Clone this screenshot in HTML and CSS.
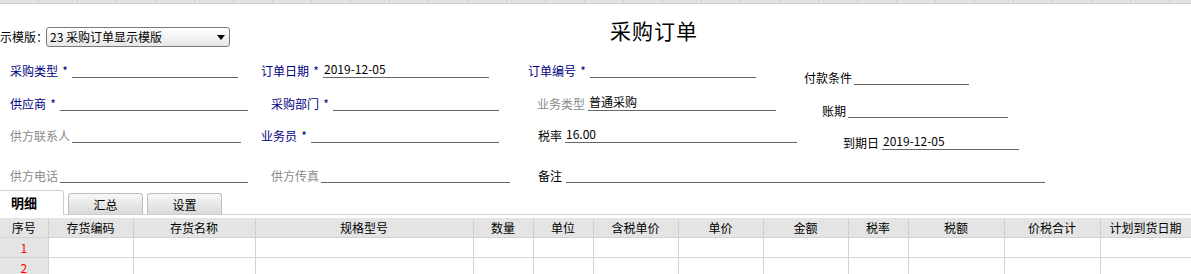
FILE: index.html
```html
<!DOCTYPE html>
<html lang="zh-CN">
<head>
<meta charset="utf-8">
<title>采购订单</title>
<link rel="stylesheet" href="styles.css">
</head>
<body>
<div class="topbar"></div>
<header class="head">
  <div class="tpl">
    <span class="tpl-label">示模版：</span>
    <div class="select"><span class="select-text">23 采购订单显示模版</span><span class="caret"></span></div>
  </div>
  <h1 class="title">采购订单</h1>
</header>

<div class="form">
  <div class="row row1">
    <div class="field"><span class="lbl blue">采购类型</span><span class="req">*</span><span class="line w166"></span></div>
    <div class="field"><span class="lbl blue">订单日期</span><span class="req">*</span><span class="line w166">2019-12-05</span></div>
    <div class="field"><span class="lbl blue">订单编号</span><span class="req">*</span><span class="line w166"></span></div>
    <div class="field low"><span class="lbl">付款条件</span><span class="line w115 gap2"></span></div>
  </div>
  <div class="row row2">
    <div class="field"><span class="lbl blue">供应商</span><span class="req">*</span><span class="line w188"></span></div>
    <div class="field off10"><span class="lbl blue">采购部门</span><span class="req">*</span><span class="line w166"></span></div>
    <div class="field off9"><span class="lbl gray">业务类型</span><span class="line w188 gap3">普通采购</span></div>
    <div class="field low off18"><span class="lbl">账期</span><span class="line w160 gap2"></span></div>
  </div>
  <div class="row row3">
    <div class="field"><span class="lbl gray">供方联系人</span><span class="line w169 gap2"></span></div>
    <div class="field"><span class="lbl blue">业务员</span><span class="req">*</span><span class="line w188"></span></div>
    <div class="field off10"><span class="lbl">税率</span><span class="line w232 gap3">16.00</span></div>
    <div class="field low off39"><span class="lbl">到期日</span><span class="line w137 gap3">2019-12-05</span></div>
  </div>
  <div class="row row4">
    <div class="field"><span class="lbl gray">供方电话</span><span class="line w188 gap2"></span></div>
    <div class="field off10"><span class="lbl gray">供方传真</span><span class="line w189 gap2"></span></div>
    <div class="field off10 wide"><span class="lbl">备注</span><span class="line w479 gap4"></span></div>
  </div>
</div>

<nav class="tabs">
  <span class="tab active">明细</span>
  <span class="tab">汇总</span>
  <span class="tab">设置</span>
</nav>

<table class="grid">
  <colgroup>
    <col class="c48"><col class="c85"><col class="c122"><col class="c218"><col class="c60"><col class="c60"><col class="c85"><col class="c85"><col class="c85"><col class="c60"><col class="c96"><col class="c96"><col class="c91">
  </colgroup>
  <thead>
    <tr>
      <th>序号</th><th>存货编码</th><th>存货名称</th><th>规格型号</th><th>数量</th><th>单位</th><th>含税单价</th><th>单价</th><th>金额</th><th>税率</th><th>税额</th><th>价税合计</th><th>计划到货日期</th>
    </tr>
  </thead>
  <tbody>
    <tr><td class="no">1</td><td></td><td></td><td></td><td></td><td></td><td></td><td></td><td></td><td></td><td></td><td></td><td></td></tr>
    <tr><td class="no">2</td><td></td><td></td><td></td><td></td><td></td><td></td><td></td><td></td><td></td><td></td><td></td><td></td></tr>
  </tbody>
</table>
</body>
</html>
```

FILE: styles.css
```css
html, body {
  margin: 0;
  padding: 0;
  background: #fff;
}
body {
  width: 1191px;
  height: 274px;
  overflow: hidden;
  font-family: "Noto Sans CJK SC", "Noto Sans", sans-serif;
  font-size: 12px;
  color: #000;
}

.topbar {
  height: 3px;
  background: repeating-linear-gradient(90deg, #e2e2e2 0, #e2e2e2 38px, #cfcfcf 38px, #cfcfcf 39px);
  border-bottom: 1px solid #c6d0da;
}

.head {
  display: flex;
  align-items: flex-start;
  height: 58px;
}
.tpl {
  display: flex;
  align-items: center;
  margin-top: 23px;
  width: 230px;
}
.tpl-label {
  width: 46px;
  line-height: 20px;
  white-space: nowrap;
}
.select {
  box-sizing: border-box;
  width: 184px;
  height: 20px;
  border: 1px solid #7a7a7a;
  border-radius: 3px;
  background: linear-gradient(#ffffff, #e6e6e6);
  display: flex;
  align-items: center;
  justify-content: space-between;
  padding: 0 4px 0 3px;
}
.select-text {
  line-height: 18px;
}
.caret {
  width: 0;
  height: 0;
  border-left: 4px solid transparent;
  border-right: 4px solid transparent;
  border-top: 5px solid #000;
  margin-top: 1px;
}
.title {
  margin: 12px 0 0 380px;
  font-size: 21px;
  font-weight: normal;
  line-height: 28px;
  letter-spacing: 1px;
}

.form {
  display: flex;
  flex-direction: column;
}
.row {
  display: grid;
  grid-template-columns: 251px 267px 276px 1fr;
  align-items: start;
  padding-left: 10px;
}
.row1 { height: 33px; }
.row2 { height: 32px; }
.row3 { height: 40px; }
.row4 { height: 23px; }

.field {
  display: flex;
  align-items: flex-end;
  height: 16px;
  white-space: nowrap;
}
.field.low { margin-top: 7px; }
.off9 { padding-left: 9px; }
.off10 { padding-left: 10px; }
.off18 { padding-left: 18px; }
.off39 { padding-left: 39px; }
.wide { grid-column: 3 / 5; }

.lbl {
  line-height: 15px;
}
.blue { color: #000080; }
.gray { color: #8a8a8a; }
.req {
  width: 14px;
  text-align: center;
  color: #000080;
  line-height: 15px;
}
.line {
  box-sizing: border-box;
  height: 16px;
  border-bottom: 1px solid #666;
  line-height: 14px;
  padding-left: 1px;
}
.gap2 { margin-left: 2px; }
.gap3 { margin-left: 3px; }
.gap4 { margin-left: 4px; }
.w115 { width: 115px; }
.w137 { width: 137px; }
.w160 { width: 160px; }
.w166 { width: 166px; }
.w169 { width: 169px; }
.w188 { width: 188px; }
.w189 { width: 189px; }
.w232 { width: 232px; }
.w479 { width: 479px; }

.tabs {
  display: flex;
  align-items: flex-end;
  height: 24px;
  border-bottom: 1px solid #cfcfcf;
}
.tab {
  box-sizing: border-box;
  width: 75px;
  height: 21px;
  margin-left: 4px;
  border: 1px solid #bdbdbd;
  border-bottom: none;
  border-radius: 3px 3px 0 0;
  background: linear-gradient(#f7f7f7, #d9d9d9);
  text-align: center;
  line-height: 21px;
}
.tab.active {
  width: 64px;
  height: 25px;
  margin-left: 0;
  margin-bottom: -1px;
  border-left: none;
  border-color: #cfcfcf;
  border-radius: 0 3px 0 0;
  background: #fff;
  font-weight: bold;
  font-size: 13px;
  text-align: left;
  padding-left: 11px;
  line-height: 24px;
}

.grid {
  margin-top: 3px;
  border-collapse: collapse;
  table-layout: fixed;
  width: 1191px;
}
.c48 { width: 48px; }
.c60 { width: 60px; }
.c85 { width: 85px; }
.c91 { width: 91px; }
.c96 { width: 96px; }
.c122 { width: 122px; }
.c218 { width: 218px; }

.grid th, .grid td {
  padding: 0;
  height: 19px;
  border-right: 1px solid #d3d3d3;
  border-bottom: 1px solid #d3d3d3;
  text-align: center;
  line-height: 19px;
  overflow: hidden;
  white-space: nowrap;
}
.grid th {
  background: #e4e4e4;
  font-weight: normal;
  border-right-color: #d0d0d0;
}
.grid td.no {
  background: #e4e4e4;
  color: #f00;
}
```
